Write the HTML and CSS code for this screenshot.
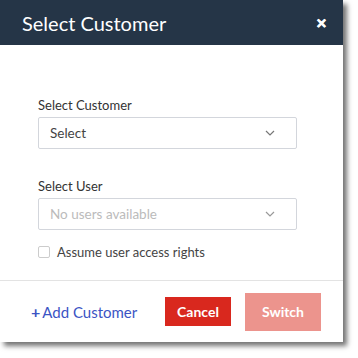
FILE: index.html
```html
<!DOCTYPE html>
<html lang="en">
<head>
    <meta charset="UTF-8">
    <title>Select Customer</title>
    <link rel="stylesheet" href="styles.css">
</head>
<body>
    <div class="modal">
        <div class="modal-header">
            <h2>Select Customer</h2>
            <button class="close-btn">&#x2715;</button>
        </div>
        <div class="modal-body">
            <div class="field">
                <label>Select Customer</label>
                <div class="select">
                    <span>Select</span>
                    <svg width="10" height="6" viewBox="0 0 10 6"><path d="M1 1l4 4 4-4" fill="none" stroke="#777" stroke-width="1.2"/></svg>
                </div>
            </div>
            <div class="field">
                <label>Select User</label>
                <div class="select disabled">
                    <span>No users available</span>
                    <svg width="10" height="6" viewBox="0 0 10 6"><path d="M1 1l4 4 4-4" fill="none" stroke="#777" stroke-width="1.2"/></svg>
                </div>
            </div>
            <label class="check"><span class="box"></span>Assume user access rights</label>
        </div>
        <div class="modal-footer">
            <a class="add-link" href="#"><span class="plus">+</span>Add Customer</a>
            <button class="btn cancel">Cancel</button>
            <button class="btn switch">Switch</button>
        </div>
    </div>
</body>
</html>
```

FILE: styles.css
```css
* { margin: 0; padding: 0; box-sizing: border-box; font-family: 'Lato', sans-serif; }
body { background: #fff; width: 358px; height: 358px; }

.modal { width: 343px; height: 342px; background: #fff; display: flex; flex-direction: column; box-shadow: 4px 4px 5px rgba(0, 0, 0, 0.55); }

.modal-header { height: 45px; background: #253547; display: flex; align-items: center; justify-content: space-between; padding: 0 16px 0 22px; }
.modal-header h2 { color: #fff; font-size: 20px; font-weight: 400; }
.close-btn { background: none; border: none; color: #fff; font-size: 13px; font-weight: 900; cursor: pointer; -webkit-text-stroke: 0.6px #fff; }

.modal-body { flex-grow: 1; padding: 52px 46px 0 38px; border-bottom: 1px solid #e3e3e3; }
.field { margin-bottom: 29px; }
.field label { display: block; font-size: 13px; color: #333; margin-bottom: 4px; line-height: 16px; }
.select { height: 32px; border: 1px solid #d3d6dc; border-radius: 2px; display: flex; align-items: center; justify-content: space-between; padding: 0 21px 0 11px; font-size: 13.5px; color: #444; }
.select.disabled { color: #bbb; }
.select.disabled svg path { stroke: #999; }

.check { display: flex; align-items: center; font-size: 13px; color: #444; margin-top: -15px; }
.check .box { width: 12px; height: 12px; border: 1px solid #ccc; border-radius: 2px; margin-right: 7px; }

.modal-footer { height: 61px; display: flex; align-items: center; padding: 0 22px 0 31px; }
.add-link { color: #3b54c4; text-decoration: none; font-size: 15px; flex-grow: 1; }
.plus { font-weight: 700; margin-right: 2px; font-size: 16px; }
.btn { border: none; color: #fff; font-size: 14px; font-weight: 700; cursor: pointer; }
.cancel { background: #d9281e; width: 66px; height: 29px; margin-right: 14px; }
.switch { background: #ec948d; width: 76px; height: 38px; }
```
